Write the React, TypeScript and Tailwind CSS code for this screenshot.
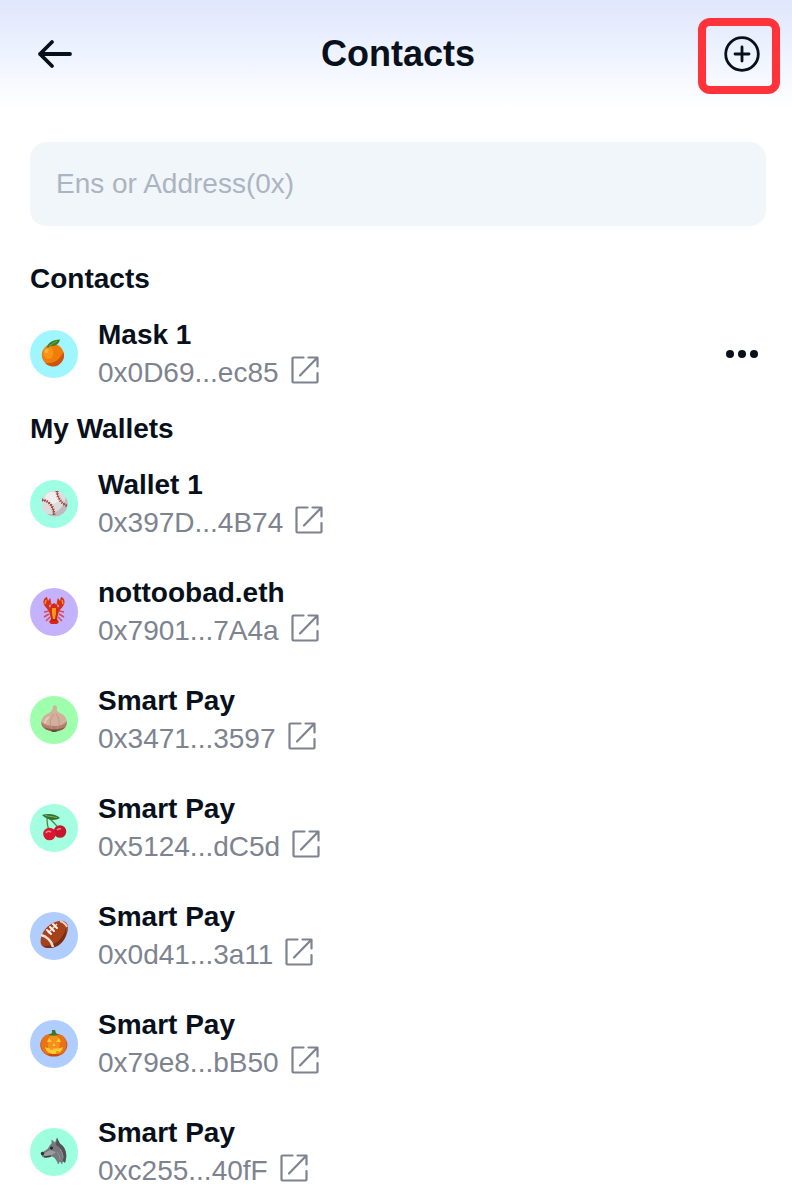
import type { ReactNode } from "react";

type Entry = {
  name: string;
  address: string;
  color: string;
  picture: ReactNode;
};

const Orange = () => (
  <>
    <circle cx="22.800" cy="25" r="11" fill="#f07d0a" />
    <path d="M33.500 22a11 11 0 0 1-18.500 11c8 1 14-2 18.500-11z" fill="#cc550e" />
    <ellipse cx="18.500" cy="23" rx="5" ry="6" fill="#fb9416" />
    <circle cx="16.500" cy="21" r="2" fill="#ffb43c" />
    <path d="M17 17c1-4 5-7 13-7.500-1 5-5 7-10 6.500l-2 2z" fill="#3f7d25" />
    <path d="M19 16l8-5" stroke="#79a84a" strokeWidth="1" />
  </>
);

const Baseball = () => (
  <>
    <circle cx="24.500" cy="23.500" r="13" fill="#dddcdd" />
    <path d="M36 17a13 13 0 0 1-19 17c8 1 17-6 19-17z" fill="#bfbcbf" />
    <ellipse cx="22" cy="18" rx="7" ry="6" fill="#f0efef" />
    <path d="M12 20c6 0 12 6 12 15M27 11c0 6 4 12 10 15" fill="none" stroke="#9b3029" strokeWidth="1" />
    <path d="M12 20c6 0 12 6 12 15M27 11c0 6 4 12 10 15" fill="none" stroke="#a6473a" strokeWidth="3" strokeDasharray="1 1.500" />
  </>
);

const Lobster = () => (
  <>
    <path d="M19 23l-5 1M19 26l-5 3M20 29l-4 4M29 23l5 1M29 26l5 3M28 29l4 4M21 17l-1-4M27 17l1-4" stroke="#d64a5a" strokeWidth="1.500" />
    <path d="M20 22l-4-5M28 22l4-5" stroke="#d42f16" strokeWidth="3" />
    <path d="M16 19c-4-3-3-9 1-10l1 4 2-3c2 4 0 9-4 9zM32 19c4-3 3-9-1-10l-1 4-2-3c-2 4 0 9 4 9z" fill="#d92f12" />
    <path d="M15 16l1-4M33 16l-1-4" stroke="#f2912b" strokeWidth="1.500" />
    <path d="M21 17l3-2 3 2 2 6-2 8 2 3-2 2h-6l-2-2 2-3-2-8z" fill="#d8290f" />
    <path d="M22 20h4v5l-1 6h-2l-1-6z" fill="#f39a1c" />
    <path d="M21 32h6" stroke="#a91617" strokeWidth="1" />
  </>
);

const Garlic = () => (
  <>
    <path d="M23 10c2-1 3-1 4 1-1 4 1 5 5 7 7 4 6 14-1 16-5 2-8 2-13 0-9-2-9-12-1-16 4-2 6-4 6-8z" fill="#d3b09b" />
    <path d="M11.300 26c0 6 4 7.500 7 8 5 2 8 2 12 0 5-1 7-4 6.500-9-3 4-7 5-12 5s-10-1-13.500-4z" fill="#b07f6f" />
    <path d="M14 31c6 3 15 3 21 0-1 2-3 3-5 3.500-4 1.500-7 1.500-11 0-2-.500-4-2-5-3.500z" fill="#8b5548" />
    <path d="M24 18c-4 5-5 10-2 15M26 18c4 5 4 10 1 15" fill="none" stroke="#c19786" strokeWidth="1" />
    <path d="M19 21c-3 2-4 4-4 6" fill="none" stroke="#e6cbbb" strokeWidth="2" />
    <path d="M21 34h6l-1 2h-4z" fill="#4f5548" />
  </>
);

const Cherries = () => (
  <>
    <path d="M17 13c0 5 0 9 2 13M18 13c4 4 8 7 10 11" fill="none" stroke="#4c8b38" strokeWidth="1.300" />
    <path d="M12 11c6-2 14-1 18 3-5 3-12 3-18-3z" fill="#34702e" />
    <path d="M15 11.500l12 2" stroke="#80ad60" strokeWidth="1" />
    <circle cx="30" cy="27.500" r="6.300" fill="#c4152c" />
    <circle cx="19.500" cy="30" r="6.300" fill="#d9182f" />
    <path d="M16 29c1-2 3-2 5-1M27 26c1-1 2-2 4-1" fill="none" stroke="#f58d91" strokeWidth="1.500" />
  </>
);

const Football = () => (
  <>
    <path d="M11 32c-2-9 6-21 18-23 5-1 9 2 9 6 0 11-8 20-18 21-4 0-8-1-9-4z" fill="#a6421b" />
    <path d="M13 34c10 1 20-6 23-18 2 10-6 20-16 20-3 0-5 0-7-2z" fill="#7d2c14" />
    <path d="M11 23c5 1 11 6 12 12" fill="none" stroke="#f2dfd9" strokeWidth="2.500" />
    <path d="M30 9c3 1 6 3 7 6" fill="none" stroke="#e8d0cc" strokeWidth="2" />
    <path d="M18 21l9-9" stroke="#f5ded8" strokeWidth="1.500" />
    <path d="M17 18l4 4M20 15l4 4M23 12l4 4" stroke="#fff1ed" strokeWidth="2" strokeLinecap="round" />
  </>
);

const Pumpkin = () => (
  <>
    <ellipse cx="23.800" cy="25" rx="13.500" ry="11.500" fill="#c94c0c" />
    <ellipse cx="18" cy="24.500" rx="7" ry="10" fill="#e87214" />
    <ellipse cx="29.500" cy="24.500" rx="7" ry="10" fill="#e87214" />
    <ellipse cx="23.800" cy="24" rx="6" ry="10" fill="#f5901d" />
    <path d="M22 10h3l1 3 2 2c-3 1-6 1-9 0l3-2z" fill="#39772b" />
    <path d="M17 22l2-4 3 4zM26 22l3-4 2 4zM22.500 26l1.500-3 1.500 3zM15 27c3 2 15 2 18 0-1 5-5 7-9 7s-8-2-9-7z" fill="#ffc933" />
    <path d="M20 28h3v2h-3zM26 31h3v2h-3z" fill="#f19a1f" />
  </>
);

const Wolf = () => (
  <>
    <path d="M11 25.500c2-2 5-3 7-5 1-2 2-4 3.500-5l0-4 3.500 3 2-5 3 6c5 3 7 9 6 15l-1 4-2-1-1 3-2-3-2 3c-1-4-3-7-6-8-3 1-5 2-8 1l-2-1z" fill="#77787c" />
    <path d="M27 10l3 6c5 3 7 9 6 15l-1 4-2-2c1-7-1-13-7-16z" fill="#505157" />
    <path d="M13 26l7-4 6 2-4 3-7 1z" fill="#9a9b9f" />
    <path d="M27 24c2 2 3 5 3 8M30 21c2 3 3 6 3 9" fill="none" stroke="#929398" strokeWidth="1" />
    <circle cx="21.500" cy="20" r="1.500" fill="#24252a" />
    <path d="M11 25l2-1 1 2-2 1zM14 29l7-1" stroke="#303137" strokeWidth="1" fill="#303137" />
  </>
);

const contacts: Entry[] = [
  { name: "Mask 1", address: "0x0D69...ec85", color: "bg-[#a0f6ff]", picture: <Orange /> },
];

const wallets: Entry[] = [
  { name: "Wallet 1", address: "0x397D...4B74", color: "bg-[#9effe5]", picture: <Baseball /> },
  { name: "nottoobad.eth", address: "0x7901...7A4a", color: "bg-[#c4b2fc]", picture: <Lobster /> },
  { name: "Smart Pay", address: "0x3471...3597", color: "bg-[#9effac]", picture: <Garlic /> },
  { name: "Smart Pay", address: "0x5124...dC5d", color: "bg-[#a3ffe0]", picture: <Cherries /> },
  { name: "Smart Pay", address: "0x0d41...3a11", color: "bg-[#afcdff]", picture: <Football /> },
  { name: "Smart Pay", address: "0x79e8...bB50", color: "bg-[#afcdff]", picture: <Pumpkin /> },
  { name: "Smart Pay", address: "0xc255...40fF", color: "bg-[#9effdf]", picture: <Wolf /> },
];

const ExternalIcon = () => (
  <svg className="size-7" viewBox="0 0 28 28" fill="none" stroke="currentColor" strokeWidth="2.200" strokeLinecap="round" strokeLinejoin="round">
    <path d="M12.500 1.500H2.500a1 1 0 0 0-1 1v23a1 1 0 0 0 1 1h23a1 1 0 0 0 1-1V17" />
    <path d="M17.500 1.500h9v9M26 2L9 19.500" />
  </svg>
);

const Row = ({ entry, menu }: { entry: Entry; menu?: boolean }) => (
  <li className="flex items-center">
    <div className={`size-12 shrink-0 rounded-full ${entry.color}`}>
      <svg className="size-12" viewBox="0 0 48 48" fill="none" aria-hidden="true">
        {entry.picture}
      </svg>
    </div>
    <div className="ml-5 grow text-[28px] leading-[38px]">
      <p className="font-bold">{entry.name}</p>
      <div className="flex items-start text-[#7d838f]">
        <span>{entry.address}</span>
        <a href="#" aria-label={`Open ${entry.address}`} className="ml-3 pt-0.5">
          <ExternalIcon />
        </a>
      </div>
    </div>
    {menu && (
      <button type="button" aria-label="More" className="mr-2">
        <svg className="size-8" viewBox="0 0 32 32" fill="currentColor">
          <circle cx="4" cy="16" r="4" />
          <circle cx="16" cy="16" r="4" />
          <circle cx="28" cy="16" r="4" />
        </svg>
      </button>
    )}
  </li>
);

const Section = ({ title, entries, menu }: { title: string; entries: Entry[]; menu?: boolean }) => (
  <section>
    <h2 className="mb-[18px] text-[28px] font-bold leading-[38px]">{title}</h2>
    <ul className="flex flex-col gap-8">
      {entries.map((entry) => (
        <Row key={entry.address} entry={entry} menu={menu} />
      ))}
    </ul>
  </section>
);

const Header = () => (
  <header className="flex items-center justify-between bg-linear-to-b from-[#e0e6fc] via-[#eef3ff] to-white py-[30px] pl-[30px] pr-[26px]">
    <button type="button" aria-label="Back" className="size-12">
      <svg className="size-12" viewBox="0 0 48 48" fill="none" stroke="currentColor" strokeWidth="3.800" strokeLinecap="round" strokeLinejoin="round">
        <path d="M40 24H10M22 12L10 24l12 12" />
      </svg>
    </button>
    <h1 className="text-4xl font-bold">Contacts</h1>
    <button type="button" aria-label="Add contact" className="relative size-12">
      <svg className="size-12" viewBox="0 0 48 48" fill="none" stroke="currentColor" strokeWidth="2.800" strokeLinecap="round">
        <circle cx="24" cy="24" r="16.300" />
        <path d="M24 17v14M17 24h14" />
      </svg>
      <span className="absolute -bottom-4 -left-5 -right-3.5 -top-3 rounded-xl border-8 border-[#ff3339]" />
    </button>
  </header>
);

const App = () => {
  return (
    <div className="min-h-screen bg-white font-['Liberation_Sans',Arial,sans-serif] text-[#07101b]">
      <Header />
      <main className="flex flex-col gap-[18px] pl-[30px] pr-[26px] pt-[34px]">
        <input
          type="text"
          aria-label="Ens or Address(0x)"
          placeholder="Ens or Address(0x)"
          className="mb-4 h-21 w-full rounded-2xl bg-[#f1f6fb] px-[26px] text-[28px] outline-none placeholder:text-[#acb4c1]"
        />
        <Section title="Contacts" entries={contacts} menu />
        <Section title="My Wallets" entries={wallets} />
      </main>
    </div>
  );
};

export default App;
